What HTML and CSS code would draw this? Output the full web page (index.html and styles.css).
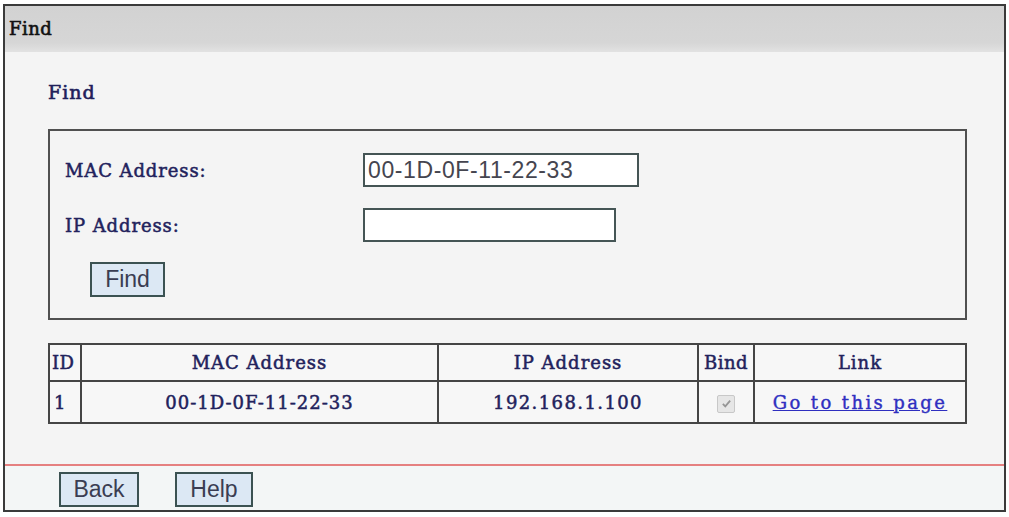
FILE: index.html
```html
<!DOCTYPE html>
<html>
<head>
<meta charset="utf-8">
<title>Find</title>
<link rel="stylesheet" href="styles.css">
</head>
<body>
<div class="frame">
  <div class="titlebar">Find</div>
  <div class="content">
    <div class="subtitle">Find</div>
    <div class="findbox">
      <div class="field-label">MAC Address:</div>
      <div><input class="text-input mac-input" type="text" value="00-1D-0F-11-22-33"></div>
      <div class="field-label">IP Address:</div>
      <div><input class="text-input ip-input" type="text" value=""></div>
      <div class="find-row"><button class="btn find-btn">Find</button></div>
    </div>
    <table class="results">
      <thead>
        <tr>
          <th class="c-id">ID</th>
          <th class="c-mac">MAC Address</th>
          <th class="c-ip">IP Address</th>
          <th class="c-bind">Bind</th>
          <th class="c-link">Link</th>
        </tr>
      </thead>
      <tbody>
        <tr>
          <td class="c-id">1</td>
          <td class="c-mac">00-1D-0F-11-22-33</td>
          <td class="c-ip">192.168.1.100</td>
          <td class="c-bind"><span class="checkbox"><svg viewBox="0 0 16 16" width="13" height="13"><path d="M3.5 8.5 L6.5 11.5 L12.5 4.5" fill="none" stroke="#959595" stroke-width="2.2"/></svg></span></td>
          <td class="c-link"><a href="#" class="page-link">Go to this page</a></td>
        </tr>
      </tbody>
    </table>
  </div>
  <div class="divider"></div>
  <div class="footer">
    <button class="btn back-btn">Back</button>
    <button class="btn help-btn">Help</button>
  </div>
</div>
</body>
</html>
```

FILE: styles.css
```css
html, body {
  margin: 0;
  padding: 0;
  background: #ffffff;
}

.frame {
  margin: 4px 3px 0 3px;
  height: 508px;
  box-sizing: border-box;
  border: 2px solid #3a3a3a;
  background: #f4f4f4;
  display: flex;
  flex-direction: column;
}

.titlebar {
  height: 46px;
  line-height: 46px;
  background: linear-gradient(#d2d2d2, #d6d6d6 80%, #e2e2e2);
  padding-left: 4px;
  font-family: "DejaVu Serif", serif;
  font-size: 18px;
  letter-spacing: 0.5px;
  color: #111111;
  -webkit-text-stroke: 0.6px #111111;
}

.content {
  padding: 0 37px 0 43px;
}

.subtitle {
  margin-top: 28px;
  height: 24px;
  line-height: 24px;
  font-family: "DejaVu Serif", serif;
  font-size: 19px;
  letter-spacing: 1px;
  color: #20205a;
  -webkit-text-stroke: 0.6px #20205a;
}

.findbox {
  margin-top: 25px;
  border: 2px solid #505050;
  padding: 22px 15px 21px 15px;
  display: grid;
  grid-template-columns: 298px 1fr;
  align-items: center;
  row-gap: 21px;
}

.field-label {
  font-family: "DejaVu Serif", serif;
  font-size: 18px;
  letter-spacing: 0.9px;
  color: #22225c;
  -webkit-text-stroke: 0.5px #22225c;
}

.text-input {
  display: block;
  box-sizing: border-box;
  height: 34px;
  margin: 0;
  border: 2px solid #455555;
  background: #ffffff;
  padding: 0 3px;
  font-family: "Liberation Sans", Arial, sans-serif;
  font-size: 23px;
  letter-spacing: 0.6px;
  color: #45454f;
  outline: none;
}

.mac-input { width: 276px; }
.ip-input { width: 253px; }

.find-row {
  grid-column: 1 / 3;
  margin-top: -1px;
}

.btn {
  box-sizing: border-box;
  height: 35px;
  margin: 0;
  padding: 0;
  border: 2px solid #3b5252;
  background: #dce8f4;
  font-family: "Liberation Sans", Arial, sans-serif;
  font-size: 23px;
  color: #3a3d52;
  border-radius: 0;
}

.find-btn {
  margin-left: 25px;
  width: 75px;
}

.results {
  margin-top: 23px;
  width: 919px;
  table-layout: fixed;
  border-collapse: separate;
  border-spacing: 0;
  border-top: 2px solid #454545;
  border-left: 2px solid #454545;
  font-family: "DejaVu Serif", serif;
  font-size: 18px;
  color: #22225c;
}

.results th,
.results td {
  box-sizing: border-box;
  padding: 0;
  border-right: 2px solid #454545;
  border-bottom: 2px solid #454545;
  text-align: center;
  background: #f7f7f7;
  font-weight: normal;
  letter-spacing: 1px;
  -webkit-text-stroke: 0.5px #22225c;
}

.results th {
  height: 37px;
}

.results td {
  height: 42px;
}

.results .c-id { width: 32px; text-align: left; padding-left: 2px; letter-spacing: 0.5px; }
.results td.c-id { padding-left: 4px; }
.results .c-mac { width: 357px; }
.results .c-ip { width: 260px; }
.results td.c-ip { letter-spacing: 1.4px; }
.results .c-bind { width: 56px; letter-spacing: 0.5px; }
.results .c-link { width: 212px; }

.checkbox {
  display: inline-flex;
  align-items: center;
  justify-content: center;
  width: 16px;
  height: 16px;
  border: 1px solid #c8c8c8;
  border-radius: 2px;
  background: #e6e6e6;
  vertical-align: middle;
  -webkit-text-stroke: 0;
}

.page-link {
  color: #2f2fc0;
  text-decoration: underline;
  letter-spacing: 2.4px;
  -webkit-text-stroke: 0.4px #2f2fc0;
}

.divider {
  margin-top: 40px;
  height: 2px;
  background: #e58080;
}

.footer {
  flex: 1;
  padding: 6px 0 0 54px;
  display: flex;
  align-items: flex-start;
  gap: 36px;
  background: #f3f6f6;
}

.back-btn { width: 80px; }
.help-btn { width: 78px; }
```
